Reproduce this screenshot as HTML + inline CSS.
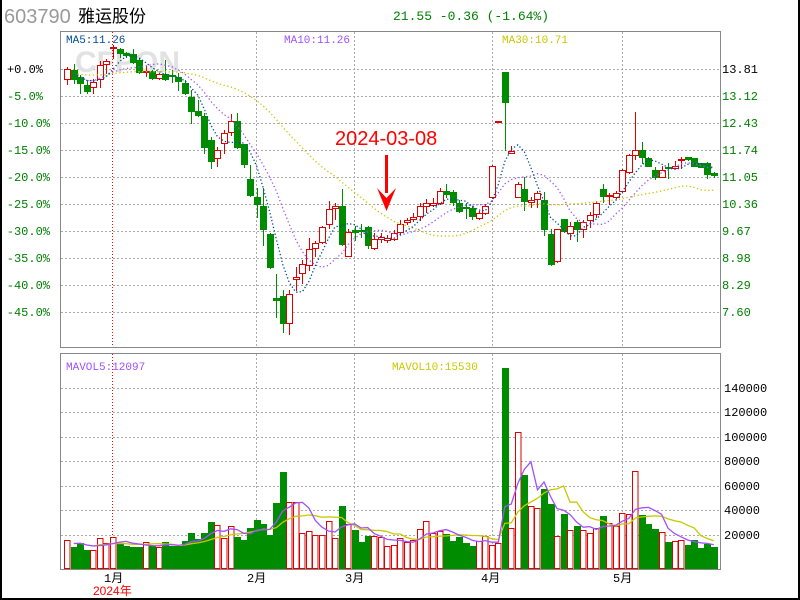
<!DOCTYPE html>
<html><head><meta charset="utf-8"><style>
html,body{margin:0;padding:0;background:#fff;}
#w{position:relative;width:800px;height:600px;overflow:hidden;background:#fff;font-family:"Liberation Sans","Noto Sans CJK SC",sans-serif;}
svg text{font-family:"Liberation Mono","Noto Sans CJK SC",monospace;}
</style></head><body><div id="w">
<svg id="s" width="800" height="600" viewBox="0 0 800 600" xmlns="http://www.w3.org/2000/svg" shape-rendering="crispEdges">
<rect x="0" y="0" width="2" height="600" fill="#000"/>
<rect x="798" y="0" width="2" height="600" fill="#000"/>
<rect x="0" y="598" width="800" height="2" fill="#000"/>
<text x="4" y="23" font-size="20" fill="#999" style="font-family:'Liberation Sans',sans-serif">603790</text>
<text x="78" y="22" font-size="17" fill="#000" style="font-family:'Liberation Sans','Noto Sans CJK SC',sans-serif">雅运股份</text>
<text x="393" y="20" font-size="13" fill="#008000">21.55 -0.36 (-1.64%)</text>
<g id="grid" stroke="#aaa" stroke-dasharray="2,2" stroke-width="1"></g>
<text x="75" y="72" font-size="30" font-weight="bold" fill="#e2e2e2" style="font-family:'Liberation Sans',sans-serif" shape-rendering="auto">CFPON</text>
<line x1="112.5" y1="32" x2="112.5" y2="347" stroke="#f00" stroke-dasharray="1,2"/>
<line x1="112.5" y1="354" x2="112.5" y2="569" stroke="#f00" stroke-dasharray="1,2"/>
<g id="c"></g>
<line x1="60.5" y1="31" x2="60.5" y2="348" stroke="#888"/>
<line x1="720.5" y1="31" x2="720.5" y2="348" stroke="#888"/>
<line x1="60" y1="31.5" x2="721" y2="31.5" stroke="#888"/>
<line x1="60" y1="347.5" x2="721" y2="347.5" stroke="#888"/>
<line x1="60.5" y1="353" x2="60.5" y2="570" stroke="#888"/>
<line x1="720.5" y1="353" x2="720.5" y2="570" stroke="#888"/>
<line x1="60" y1="353.5" x2="721" y2="353.5" stroke="#888"/>
<line x1="60" y1="569.5" x2="721" y2="569.5" stroke="#888"/>
<g font-size="12" text-anchor="end" fill="#008000">
<text x="43" y="73" fill="#000">+0.0%</text><text x="43" y="100">-5.0%</text><text x="50" y="127">-10.0%</text><text x="50" y="154">-15.0%</text><text x="50" y="181">-20.0%</text><text x="50" y="208">-25.0%</text><text x="50" y="235">-30.0%</text><text x="50" y="262">-35.0%</text><text x="50" y="289">-40.0%</text><text x="50" y="316">-45.0%</text>
</g>
<g font-size="12" fill="#008000">
<text x="722" y="73" fill="#000">13.81</text><text x="722" y="100">13.12</text><text x="722" y="127">12.43</text><text x="722" y="154">11.74</text><text x="722" y="181">11.05</text><text x="722" y="208">10.36</text><text x="722" y="235">9.67</text><text x="722" y="262">8.98</text><text x="722" y="289">8.29</text><text x="722" y="316">7.60</text>
</g>
<g font-size="12" fill="#000" style="font-family:'Liberation Sans',sans-serif">
<text x="724" y="392">140000</text><text x="724" y="416">120000</text><text x="724" y="441">100000</text><text x="724" y="465">80000</text><text x="724" y="490">60000</text><text x="724" y="514">40000</text><text x="724" y="539">20000</text>
</g>
<text x="66" y="43" font-size="11" fill="#004c9c">MA5:11.26</text>
<text x="284" y="43" font-size="11" fill="#a050ff">MA10:11.26</text>
<text x="502" y="43" font-size="11" fill="#c8c800">MA30:10.71</text>
<text x="66" y="370" font-size="11" fill="#a050ff">MAVOL5:12097</text>
<text x="392" y="370" font-size="11" fill="#c8c800">MAVOL10:15530</text>
<text x="335" y="145" font-size="20" fill="#f00" style="font-family:'Liberation Sans',sans-serif;font-weight:normal">2024-03-08</text>
<rect x="385" y="155" width="3" height="38" fill="#f00"/>
<polygon points="377,188 386.5,211 396,188 386.5,198" fill="#f00" shape-rendering="auto"/>
<g font-size="12" fill="#000" style="font-family:'Liberation Sans','Noto Sans CJK SC',sans-serif">
<text x="104" y="582">1月</text><text x="247" y="582">2月</text><text x="345" y="582">3月</text><text x="481" y="582">4月</text><text x="613" y="582">5月</text>
</g>
<text x="93" y="595" font-size="12" fill="#f00" style="font-family:'Liberation Sans','Noto Sans CJK SC',sans-serif">2024年</text>
</svg>
<script>
var NS="http://www.w3.org/2000/svg";
function el(p,t,a){var e=document.createElementNS(NS,t);for(var k in a)e.setAttribute(k,a[k]);p.appendChild(e);return e;}
var g=document.getElementById('grid');
[69,96,123,150,177,204,231,258,285,312].forEach(function(y){el(g,'line',{x1:61,y1:y+.5,x2:720,y2:y+.5});});
[388,412,437,461,486,510,535].forEach(function(y){el(g,'line',{x1:61,y1:y+.5,x2:720,y2:y+.5});});
[256,354,492,622].forEach(function(x){el(g,'line',{x1:x+.5,y1:32,x2:x+.5,y2:347});el(g,'line',{x1:x+.5,y1:354,x2:x+.5,y2:569});});
var D=[[1,69,79,67,84],[0,70,79,64,83],[0,77,83,75,93],[0,85,91,81,93],[1,82,87,79,93],[1,65,79,61,87],[1,61,64,59,73],[1,47,48,45,58],[0,49,53,48,57],[0,53,55,52,57],
[0,54,62,49,63],[0,60,72,58,73],[1,71,72,66,76],[0,71,78,70,79],[1,74,78,73,79],[0,74,79,60,80],[0,75,76,70,82],[0,77,81,73,90],[0,83,93,80,94],[0,97,111,90,123],
[0,111,115,100,116],[0,116,147,113,153],[0,140,161,137,168],[1,150,158,147,166],[1,133,143,130,153],[1,121,132,114,135],[0,121,147,113,148],[0,144,164,144,167],[0,179,195,165,196],[0,197,204,188,217],
[0,206,229,188,245],[0,234,267,233,268],[0,298,300,274,317],[0,296,323,290,332],[1,294,323,290,334],[1,277,279,267,290],[1,264,273,260,283],[1,249,265,238,270],[1,243,248,241,256],[1,227,242,226,243],
[1,209,224,201,228],[1,206,208,203,219],[0,206,244,189,245],[1,232,256,229,256],[0,230,232,226,240],[0,230,231,224,237],[0,227,245,226,248],[1,239,248,233,249],[1,237,239,233,242],[1,238,240,235,242],
[1,233,239,230,240],[1,224,232,220,234],[1,220,222,218,224],[1,217,219,213,221],[1,206,216,203,220],[1,203,206,199,212],[1,203,205,198,206],[1,191,203,188,204],[0,191,194,184,197],[0,192,202,190,205],
[0,203,211,200,212],[0,207,208,203,218],[0,208,216,206,219],[1,213,218,211,219],[1,206,213,204,214],[1,166,197,165,198],[1,121,122,121,122],[0,72,102,72,150],[1,151,153,146,153],[1,184,197,182,197],
[0,189,201,177,210],[1,200,202,197,207],[1,193,199,191,207],[0,200,229,192,235],[0,234,264,229,265],[1,229,261,229,262],[0,219,231,219,232],[1,226,233,222,239],[0,222,229,220,241],[1,222,229,220,237],
[1,215,220,212,227],[1,203,214,201,217],[0,189,196,184,202],[1,195,196,193,204],[1,193,197,191,198],[1,170,191,169,192],[1,155,172,154,173],[1,150,155,112,159],[0,150,157,142,163],[0,158,166,157,166],
[0,170,177,167,179],[1,170,177,166,177],[0,167,168,163,178],[1,166,168,161,168],[1,159,160,157,168],[0,157,159,157,160],[0,158,166,158,166],[0,163,167,163,167],[0,163,174,162,178],[0,173,175,172,177]];
var V=[540,547,543,550,550,538,543,537,543,546,547,547,542,546,547,542,546,546,541,533,539,533,522,525,538,526,537,540,528,520,524,535,503,472,502,502,533,531,535,535,521,538,506,524,530,542,536,536,537,546,545,
538,542,540,529,521,533,531,534,541,537,543,546,541,536,545,543,368,528,432,475,506,508,489,504,536,514,530,526,530,533,528,516,523,526,513,514,471,515,524,529,532,542,541,540,545,540,548,544,547];
var c=document.getElementById('c');
function X(i){return 67.3+i*6.53;}
var cl=[],vl=[];
D.forEach(function(d,i){
 var x=X(i),col=d[0]?'#e00000':'#008c00';
 var xi=Math.round(x);
 el(c,'rect',{x:xi,y:d[3],width:1,height:d[4]-d[3]+1,fill:col});
 var h=d[2]-d[1];
 if(h<1){el(c,'rect',{x:xi-3,y:d[1],width:7,height:2,fill:col});}
 else if(d[0]){el(c,'rect',{x:xi-2.5,y:d[1]+.5,width:6,height:h,fill:'#fff',stroke:col,'stroke-width':1.3});}
 else{el(c,'rect',{x:xi-3,y:d[1],width:7,height:h+1,fill:col});}
 cl.push(d[0]?d[1]:d[2]);
 var vt=V[i]||545;
 if(d[0])el(c,'rect',{x:xi-2.5,y:vt+.5,width:5.5,height:568-vt,fill:'#fff',stroke:col,'stroke-width':1.3});
 else el(c,'rect',{x:xi-3,y:vt,width:7,height:569-vt,fill:col});
 vl.push(vt);
});
function ma(a,n){return a.map(function(v,i){var s=0,k=0;for(var j=Math.max(0,i-n+1);j<=i;j++){s+=a[j];k++;}return s/k;});}
function line(a,col,dash,start){var p='';for(var i=start;i<a.length;i++)p+=(p?'L':'M')+X(i).toFixed(1)+','+a[i].toFixed(1);var o={d:p,fill:'none',stroke:col,'stroke-width':1.3,'shape-rendering':'auto'};if(dash)o['stroke-dasharray']=dash;el(c,'path',o);}
var pre=[];for(var k=0;k<30;k++)pre.push(74);
line(ma(pre.concat(cl),30).slice(30),'#c8c800','1.3,2.5',1);
line(ma(cl,10),'#a050ff','1.3,2.5',1);
line(ma(cl,5),'#004c9c','1.3,2.2',1);
line(ma(vl,10),'#c8c800',null,1);
line(ma(vl,5),'#a050ff',null,1);
</script>
</div></body></html>
